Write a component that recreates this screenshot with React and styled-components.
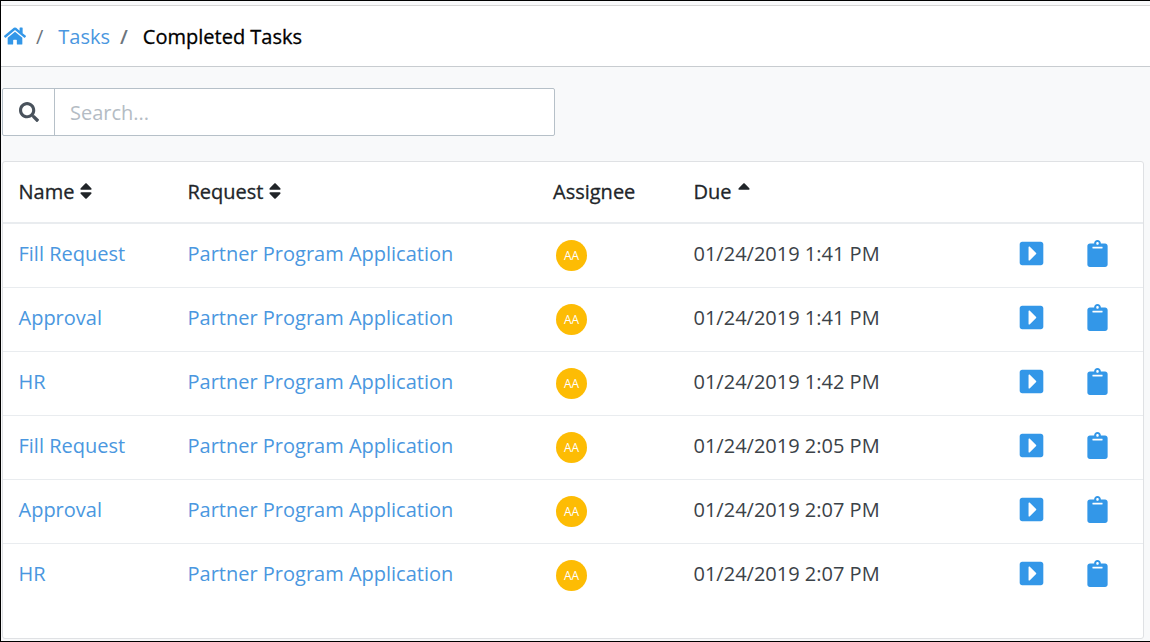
import React from 'react';
import styled, { createGlobalStyle } from 'styled-components';
import { FaHome, FaSearch, FaSort, FaSortUp, FaCaretSquareRight, FaClipboard } from 'react-icons/fa';

const Global = createGlobalStyle`
    html, body {
        margin: 0;
        padding: 0;
        background: #fff;
    }
    * { box-sizing: border-box; }
`;

const Frame = styled.div`
    width: 1150px;
    height: 642px;
    overflow: hidden;
    display: flex;
    flex-direction: column;
    background: #f8f9fa;
    border-top: 1px solid #000;
    border-left: 1px solid #000;
    border-bottom: 1px solid #000;
    font-family: "Open Sans", sans-serif;
`;

const Breadcrumb = styled.nav`
    height: 62px;
    padding: 0 0 0 3px;
    display: flex;
    align-items: center;
    background: #fff;
    border-top: 1px solid #d5d5d5;
    border-bottom: 1px solid #c8ccd0;
    margin-top: 4px;
    font-size: 20px;
    flex-shrink: 0;
`;

const HomeLink = styled.a`
    display: flex;
    color: #3397e8;
    font-size: 22px;
`;

const Slash = styled.span`
    color: #6c757d;
    margin: ${p => p.$margin};
    font-weight: ${p => p.$weight || 400};
`;

const CrumbLink = styled.a`
    color: #4a97e0;
`;

const Current = styled.span`
    color: #000;
    -webkit-text-stroke: 0.3px #000;
`;

const Body = styled.div`
    flex: 1;
    padding: 21px 6px 0 1px;
    display: flex;
    flex-direction: column;
`;

const SearchBar = styled.div`
    width: 553px;
    height: 48px;
    display: flex;
    background: #fff;
    border: 1px solid #b6c0c8;
    border-radius: 2px;
`;

const SearchIcon = styled.div`
    width: 52px;
    display: flex;
    align-items: center;
    justify-content: center;
    border-right: 1px solid #b6c0c8;
    color: #49525c;
    font-size: 20px;
`;

const SearchInput = styled.input`
    flex: 1;
    border: 0;
    outline: 0;
    background: transparent;
    padding: 0 15px;
    font-family: inherit;
    font-size: 20px;
    &::placeholder {
        color: #b4bcc4;
        opacity: 1;
    }
`;

const Card = styled.div`
    margin-top: 25px;
    flex: 1;
    margin-bottom: 2px;
    background: #fff;
    border: 1px solid #dfe1e4;
    border-radius: 3px;
`;

const Row = styled.div`
    display: grid;
    grid-template-columns: 169px 365.5px 140.5px 324px 66.5px 1fr;
    align-items: center;
    height: ${p => (p.$head ? '62px' : '64px')};
    padding-left: 15.5px;
    border-bottom: ${p => (p.$head ? '2px solid #e9ecef' : '1px solid #e9ecef')};
    font-size: 20px;
    color: #3b4248;
    &:last-child {
        border-bottom-color: transparent;
    }
`;

const HeadCell = styled.div`
    display: flex;
    align-items: center;
    padding-bottom: 2px;
    color: #212529;
    font-weight: 500;
    -webkit-text-stroke: 0.3px #212529;
`;

const SortIcon = styled.span`
    display: flex;
    margin-left: 2px;
    font-size: 20px;
    color: #212529;
`;

const LinkCell = styled.a`
    padding-bottom: 4px;
    color: #4a97e0;
`;

const Due = styled.div`
    padding-bottom: 4px;
`;

const Avatar = styled.div`
    width: 31px;
    height: 31px;
    margin-left: 3px;
    border-radius: 50%;
    background: #fdbc04;
    color: #fff;
    font-size: 12px;
    display: flex;
    align-items: center;
    justify-content: center;
`;

const ActionIcon = styled.div`
    display: flex;
    padding-bottom: 4px;
    color: #3397e8;
    font-size: ${p => p.$size}px;
`;

const rows = [
    ['Fill Request', '01/24/2019 1:41 PM'],
    ['Approval', '01/24/2019 1:41 PM'],
    ['HR', '01/24/2019 1:42 PM'],
    ['Fill Request', '01/24/2019 2:05 PM'],
    ['Approval', '01/24/2019 2:07 PM'],
    ['HR', '01/24/2019 2:07 PM'],
];

export default function App() {
    return (
        <Frame>
            <Global />
            <Breadcrumb>
                <HomeLink><FaHome /></HomeLink>
                <Slash $margin="0 15px 0 10px">/</Slash>
                <CrumbLink>Tasks</CrumbLink>
                <Slash $margin="0 15px 0 10px" $weight={600}>/</Slash>
                <Current>Completed Tasks</Current>
            </Breadcrumb>
            <Body>
                <SearchBar>
                    <SearchIcon><FaSearch /></SearchIcon>
                    <SearchInput placeholder="Search..." />
                </SearchBar>
                <Card>
                    <Row $head>
                        <HeadCell>Name<SortIcon><FaSort /></SortIcon></HeadCell>
                        <HeadCell>Request<SortIcon><FaSort /></SortIcon></HeadCell>
                        <HeadCell>Assignee</HeadCell>
                        <HeadCell>Due<SortIcon><FaSortUp /></SortIcon></HeadCell>
                    </Row>
                    {rows.map(([name, due], i) => (
                        <Row key={i}>
                            <LinkCell>{name}</LinkCell>
                            <LinkCell>Partner Program Application</LinkCell>
                            <Avatar>AA</Avatar>
                            <Due>{due}</Due>
                            <ActionIcon $size={27}><FaCaretSquareRight /></ActionIcon>
                            <ActionIcon $size={27}><FaClipboard /></ActionIcon>
                        </Row>
                    ))}
                </Card>
            </Body>
        </Frame>
    );
}
